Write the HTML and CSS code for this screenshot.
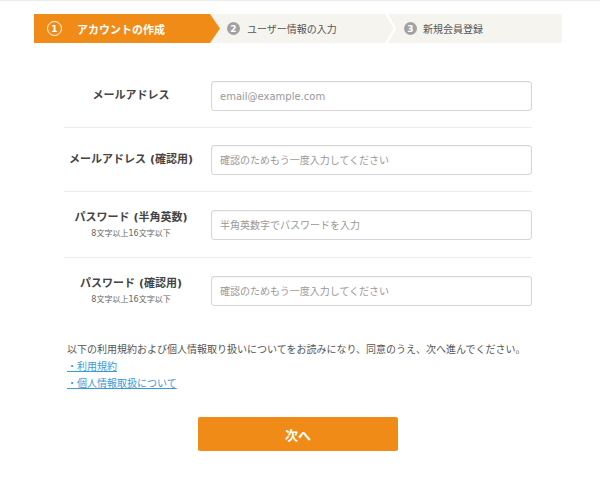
FILE: index.html
```html
<!DOCTYPE html>
<html lang="ja">
<head>
  <meta charset="UTF-8">
  <meta name="viewport" content="width=device-width, initial-scale=1.0">
  <title>アカウントの作成</title>
  <link rel="stylesheet" href="styles.css">
</head>
<body>
  <div class="page">
    <!-- Progress steps -->
    <div class="steps">
      <div class="step step-current"><span class="step-num">1</span>アカウントの作成</div>
      <div class="step step-second"><span class="step-num">2</span>ユーザー情報の入力</div>
      <svg class="step-sep" viewBox="0 0 12 29" aria-hidden="true">
        <polyline points="1,-1 10,14.5 1,30" fill="none" stroke="#fff" stroke-width="2.5"/>
      </svg>
      <div class="step step-last"><span class="step-num">3</span>新規会員登録</div>
    </div>

    <!-- Account form -->
    <form class="signup" id="signupForm">
      <div class="field">
        <label class="field-label" for="email">メールアドレス</label>
        <input class="field-input" type="email" id="email" placeholder="email@example.com">
      </div>
      <div class="field">
        <label class="field-label" for="emailConfirm">メールアドレス (確認用)</label>
        <input class="field-input" type="email" id="emailConfirm" placeholder="確認のためもう一度入力してください">
      </div>
      <div class="field">
        <label class="field-label" for="password">パスワード (半角英数)<span class="field-note">8文字以上16文字以下</span></label>
        <input class="field-input" type="password" id="password" placeholder="半角英数字でパスワードを入力">
      </div>
      <div class="field">
        <label class="field-label" for="passwordConfirm">パスワード (確認用)<span class="field-note">8文字以上16文字以下</span></label>
        <input class="field-input" type="password" id="passwordConfirm" placeholder="確認のためもう一度入力してください">
      </div>
    </form>

    <div class="agree">
      <p>以下の利用規約および個人情報取り扱いについてをお読みになり、同意のうえ、次へ進んでください。</p>
      <a href="#">・利用規約</a>
      <a href="#">・個人情報取扱について</a>
    </div>

    <div class="actions">
      <button type="submit" form="signupForm" class="next-btn">次へ</button>
    </div>
  </div>
</body>
</html>
```

FILE: styles.css
```css
/* General Styles */
body {
  margin: 0;
  border-top: 1px solid #ececec;
  font-family: "DejaVu Sans", "Noto Sans CJK JP", sans-serif;
  color: #333;
  background: #fff;
}

.page {
  width: 528px;
  margin: 13px 0 0 34px;
}

/* Steps */
.steps {
  display: flex;
  height: 29px;
  background: #f6f4ee;
}

.step {
  display: flex;
  align-items: center;
  box-sizing: border-box;
  font-size: 10px;
  color: #555;
  white-space: nowrap;
}

.step-num {
  display: inline-flex;
  align-items: center;
  justify-content: center;
  box-sizing: border-box;
  width: 13px;
  height: 13px;
  margin-right: 7px;
  border-radius: 50%;
  background: #a2a2a2;
  color: #fff;
  font-size: 9px;
  font-weight: bold;
}

.step-current {
  width: 186px;
  padding-left: 13px;
  background: #ef8b16;
  color: #fff;
  font-size: 11px;
  font-weight: bold;
  clip-path: polygon(0 0, 176px 0, 100% 50%, 176px 100%, 0 100%);
}

.step-current .step-num {
  width: 15px;
  height: 15px;
  margin-right: 15px;
  border: 1.5px solid #fff;
  background: none;
}

.step-second {
  width: 165px;
  padding-left: 7px;
}

.step-sep {
  flex: none;
  width: 12px;
  height: 29px;
}

.step-last {
  padding-left: 7px;
}

.step-last .step-num {
  margin-right: 6px;
}

/* Form */
.signup {
  margin-top: 21px;
  padding: 0 30px;
}

.field {
  display: flex;
  align-items: center;
  gap: 13px;
  padding: 17px 0 16px;
  border-bottom: 1px solid #ececec;
}

.field:last-child {
  border-bottom: none;
}

.field-label {
  flex: none;
  width: 134px;
  text-align: center;
  font-size: 11px;
  font-weight: bold;
  line-height: 18px;
  color: #444;
}

.field-note {
  display: block;
  font-size: 8px;
  font-weight: normal;
  line-height: 14px;
  color: #666;
}

.field-input {
  flex: 1;
  height: 30px;
  box-sizing: border-box;
  padding: 0 8px;
  border: 1px solid #d6d6d6;
  border-radius: 3px;
  box-shadow: inset 0 1px 2px rgba(0, 0, 0, 0.05);
  font-family: inherit;
  font-size: 10px;
  color: #333;
}

.field-input::placeholder {
  color: #999;
}

/* Agreement */
.agree {
  padding: 18px 0 0 33px;
  font-size: 10px;
  line-height: 17px;
  color: #555;
}

.agree p {
  margin: 0;
}

.agree a {
  display: block;
  width: fit-content;
  color: #3a9ad9;
  text-decoration: underline;
}

/* Button */
.actions {
  display: flex;
  justify-content: center;
  margin-top: 25px;
}

.next-btn {
  width: 200px;
  height: 34px;
  border: none;
  border-radius: 2px;
  background: #ef8b16;
  color: #fff;
  font-family: inherit;
  font-size: 13px;
  font-weight: bold;
  cursor: pointer;
}
```
